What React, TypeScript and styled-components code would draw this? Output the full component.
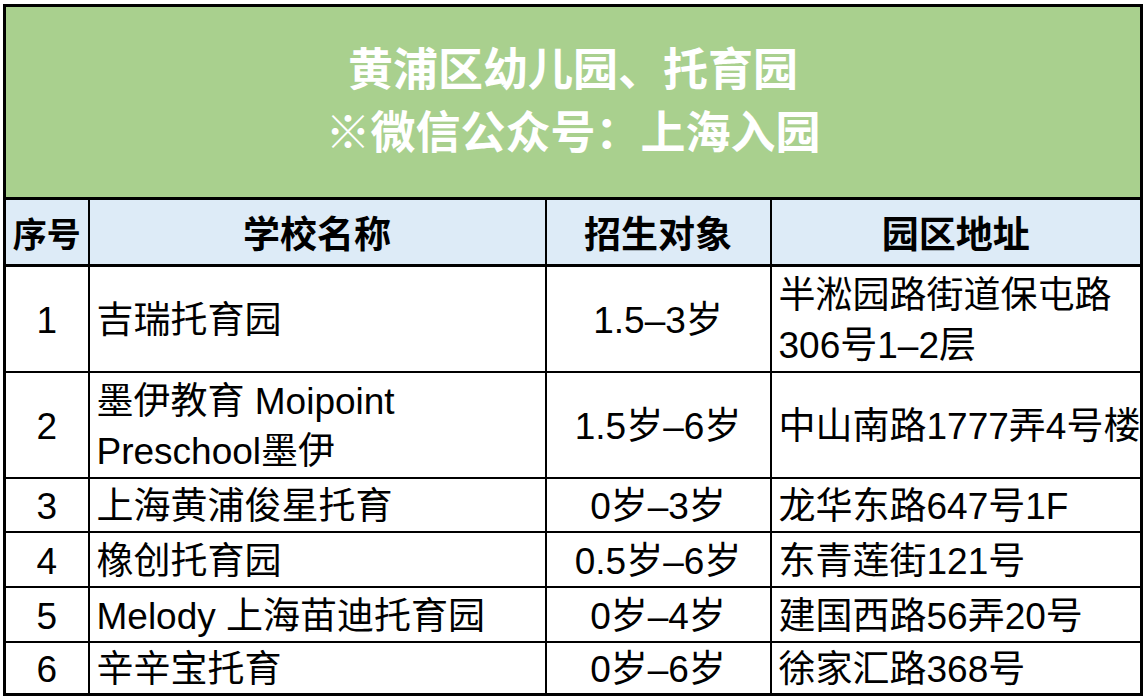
import styled, { createGlobalStyle } from 'styled-components'

const GlobalStyle = createGlobalStyle`
  html, body {
    margin: 0;
    padding: 0;
    background: #ffffff;
  }
  body {
    font-family: "Liberation Sans", "Noto Sans CJK SC", sans-serif;
    color: #000;
  }
`

interface School {
    no: number
    name: string[]
    age: string
    address: string[]
    height: number
}

const schools: School[] = [
    { no: 1, name: ['吉瑞托育园'], age: '1.5–3岁', address: ['半淞园路街道保屯路', '306号1–2层'], height: 105 },
    { no: 2, name: ['墨伊教育 Moipoint', 'Preschool墨伊'], age: '1.5岁–6岁', address: ['中山南路1777弄4号楼'], height: 106 },
    { no: 3, name: ['上海黄浦俊星托育'], age: '0岁–3岁', address: ['龙华东路647号1F'], height: 54 },
    { no: 4, name: ['橡创托育园'], age: '0.5岁–6岁', address: ['东青莲街121号'], height: 55 },
    { no: 5, name: ['Melody 上海苗迪托育园'], age: '0岁–4岁', address: ['建国西路56弄20号'], height: 55 },
    { no: 6, name: ['辛辛宝托育'], age: '0岁–6岁', address: ['徐家汇路368号'], height: 51 },
]

const Page = styled.div`
  padding: 4px 0 0 3px;
`

const Sheet = styled.table`
  border-collapse: collapse;
  table-layout: fixed;
  width: 1139px;
  border: 3px solid #000;
`

const TitleCell = styled.th`
  height: 190px;
  background: #a9d08e;
  color: #ffffff;
  font-family: "Liberation Sans", "Noto Sans CJK SC", sans-serif;
  font-size: 45px;
  font-weight: 700;
  line-height: 63px;
  text-align: center;
  border-bottom: 3px solid #000;
  padding: 0;
`

const HeadRow = styled.tr`
  height: 67px;
`

const HeadCell = styled.th<{ $small?: boolean }>`
  background: #ddebf7;
  border: 2px solid #000;
  border-bottom-width: 3px;
  font-size: ${p => (p.$small ? '34px' : '37px')};
  font-weight: 700;
  text-align: center;
  padding: 0;
  white-space: nowrap;
`

const Row = styled.tr<{ $h: number }>`
  height: ${p => p.$h}px;
`

const Cell = styled.td<{ $align?: 'left' | 'center'; $multi?: boolean }>`
  border: 2px solid #000;
  font-size: 37px;
  line-height: ${p => (p.$multi ? '50px' : '46px')};
  text-align: ${p => p.$align || 'left'};
  padding: ${p => (p.$align === 'center' ? '4px 0 0' : '4px 0 0 7px')};
  white-space: nowrap;
  overflow: hidden;
`

const Line = styled.div``

export default function App() {
    return (
        <>
            <GlobalStyle />
            <Page>
                <Sheet>
                    <colgroup>
                        <col style={{ width: 84 }} />
                        <col style={{ width: 457 }} />
                        <col style={{ width: 225 }} />
                        <col style={{ width: 371 }} />
                    </colgroup>
                    <thead>
                        <tr>
                            <TitleCell colSpan={4}>
                                <Line>黄浦区幼儿园、托育园</Line>
                                <Line>※微信公众号：上海入园</Line>
                            </TitleCell>
                        </tr>
                        <HeadRow>
                            <HeadCell $small>序号</HeadCell>
                            <HeadCell>学校名称</HeadCell>
                            <HeadCell>招生对象</HeadCell>
                            <HeadCell>园区地址</HeadCell>
                        </HeadRow>
                    </thead>
                    <tbody>
                        {schools.map(s => (
                            <Row key={s.no} $h={s.height}>
                                <Cell $align="center">{s.no}</Cell>
                                <Cell $multi={s.name.length > 1}>
                                    {s.name.map(n => <Line key={n}>{n}</Line>)}
                                </Cell>
                                <Cell $align="center">{s.age}</Cell>
                                <Cell $multi={s.address.length > 1}>
                                    {s.address.map(a => <Line key={a}>{a}</Line>)}
                                </Cell>
                            </Row>
                        ))}
                    </tbody>
                </Sheet>
            </Page>
        </>
    )
}
